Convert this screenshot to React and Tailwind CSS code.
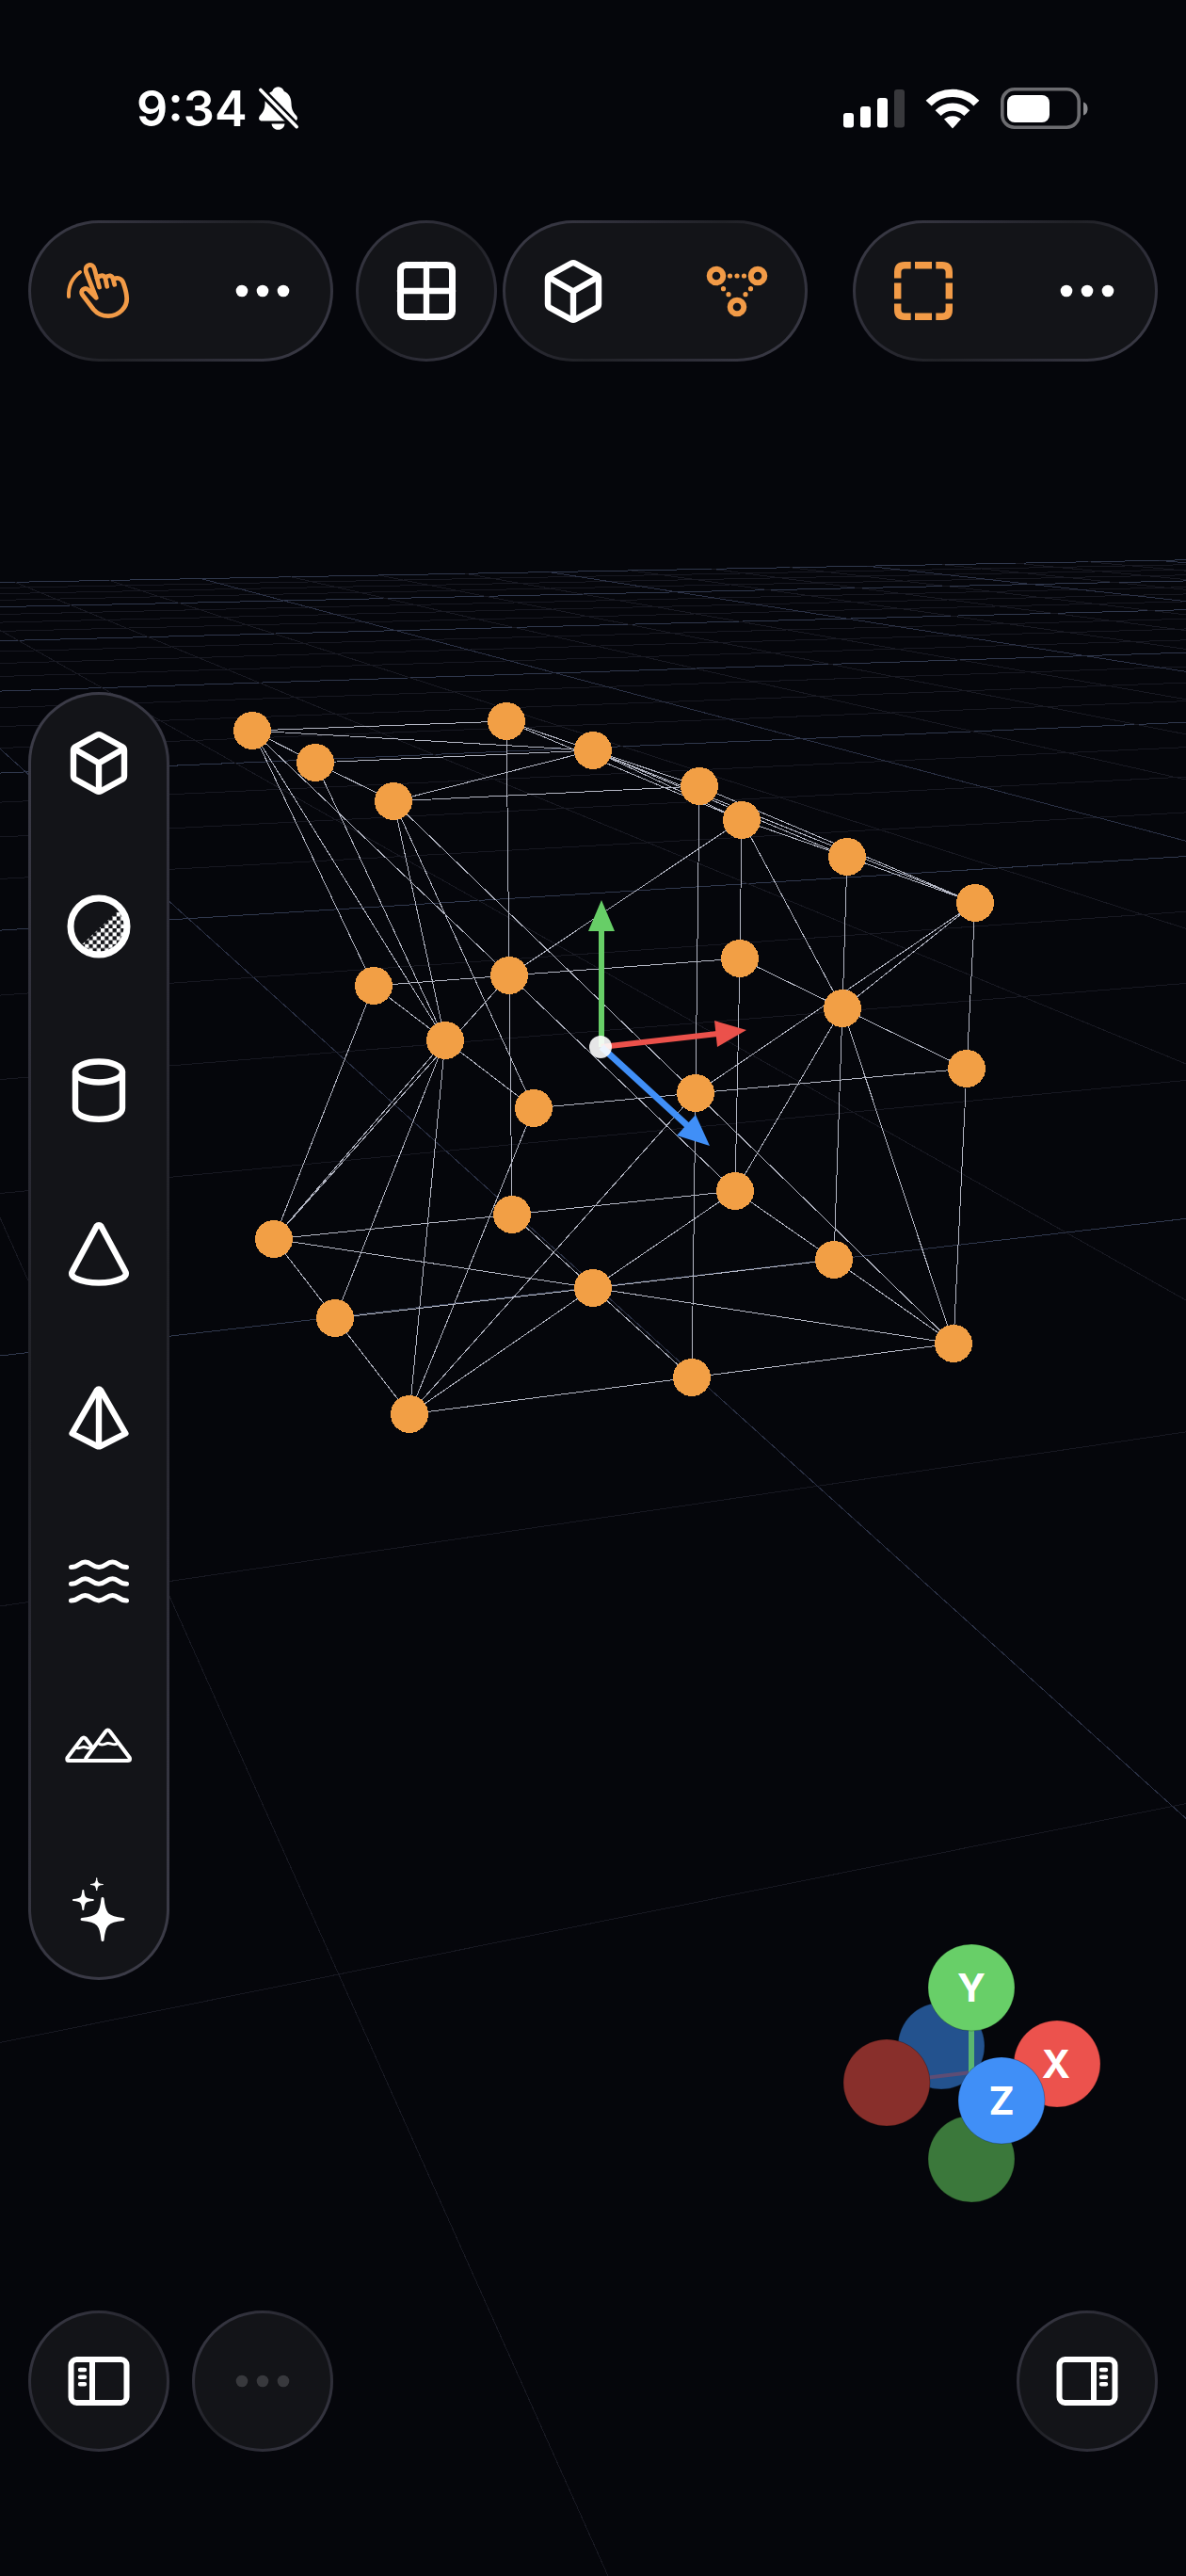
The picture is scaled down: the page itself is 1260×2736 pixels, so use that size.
import clsx from "clsx";

const HORIZON = 458;
const VANISH_X = -374;

// rows of the ground plane, from far to near, every fourth one is a major line
const gridRows = Array.from({ length: 27 }, (_, i) => {
  const k = 24 - i;
  const depth = 0.0010183 + (k * 0.000868) / 4;
  return {
    key: k,
    major: k % 4 === 0,
    y1: HORIZON + 1 / depth,
    y2: HORIZON + 1 / (depth * 1.1742),
  };
});

// lines that run away from the viewer towards the vanishing point
const gridColumns = Array.from({ length: 18 }, (_, i) => {
  const k = i - 1;
  const run = 1.109 + (k * 2.645) / 4;
  // start on the far edge of the plane
  const a = 618.6;
  const slope = (594.8 - 618.6) / 1260;
  const t = (a + slope * VANISH_X - HORIZON) / (1 - slope * run);
  return {
    key: k,
    major: k % 4 === 0,
    x1: VANISH_X + run * t,
    y1: HORIZON + t,
    x2: VANISH_X + run * 2400,
    y2: HORIZON + 2400,
  };
});

const nodes = {
  a: [268, 776],
  b: [335, 810],
  c: [418, 851],
  d: [538, 766],
  e: [630, 797],
  f: [397, 1047],
  g: [541, 1036],
  h: [473, 1105],
  i: [743, 835],
  j: [788, 871],
  k: [900, 910],
  l: [1036, 959],
  m: [786, 1018],
  n: [895, 1071],
  o: [1027, 1135],
  p: [739, 1161],
  q: [567, 1177],
  r: [544, 1290],
  s: [291, 1316],
  t: [356, 1400],
  u: [435, 1502],
  v: [630, 1368],
  w: [781, 1265],
  x: [886, 1338],
  y: [1013, 1427],
  z: [735, 1463],
};

const edges = [
  "ab", "bc", "ad", "dj", "jk", "kl", "ci", "il",
  "ea", "eb", "ec", "ed", "ei", "ej", "ek", "el",
  "af", "fs", "cq", "qu", "st", "tu",
  "ha", "hb", "hc", "hf", "hq", "hs", "ht", "hu",
  "ga", "gd", "gj", "gf", "gm", "gs", "gr", "gw",
  "jm", "mw", "lo", "oy", "wx", "xy",
  "nj", "nk", "nl", "nm", "no", "nw", "nx", "ny",
  "pc", "pi", "pl", "pq", "po", "pu", "pz", "py",
  "sr", "rw", "uz", "zy",
  "vs", "vr", "vw", "vt", "vx", "vu", "vz", "vy",
];

const Viewport = () => (
  <svg
    className="absolute inset-0 w-full h-full"
    viewBox="0 0 1260 2736"
    preserveAspectRatio="xMidYMid slice"
    aria-hidden="true"
  >
    <g shapeRendering="crispEdges">
      {gridRows.map((l) => (
        <line key={l.key} x1={0} y1={l.y1} x2={1260} y2={l.y2} stroke={l.major ? "#30384d" : "#171821"} />
      ))}
      {gridColumns.map((l) => (
        <line key={l.key} x1={l.x1} y1={l.y1} x2={l.x2} y2={l.y2} stroke={l.major ? "#2b3145" : "#181922"} />
      ))}
      {edges.map((e) => {
        const [x1, y1] = nodes[e[0]];
        const [x2, y2] = nodes[e[1]];
        return <line key={e} x1={x1} y1={y1} x2={x2} y2={y2} stroke="#b4b7c4" />;
      })}
      {Object.entries(nodes).map(([id, [cx, cy]]) => (
        <circle key={id} cx={cx} cy={cy} r={20} fill="#f29f45" />
      ))}
    </g>
    <path d="M639 1112V985" stroke="#67ce67" strokeWidth="6" />
    <path d="M639 956L653 989H625Z" fill="#67ce67" />
    <path d="M639 1112L762 1098" stroke="#eb514b" strokeWidth="6" />
    <path d="M793 1094L759 1084L762 1112Z" fill="#eb514b" />
    <path d="M639 1112L732 1197" stroke="#408ff7" strokeWidth="7" />
    <path d="M754 1217L739 1184L719 1206Z" fill="#408ff7" />
    <circle cx="638" cy="1112" r="12" fill="#fff" fillOpacity="0.9" />
  </svg>
);

const Icon = ({ children, width = 6.4, className }) => (
  <svg
    className={clsx("w-20 h-20", className)}
    viewBox="0 0 80 80"
    fill="none"
    stroke="currentColor"
    strokeWidth={width}
    strokeLinecap="round"
    strokeLinejoin="round"
    aria-hidden="true"
  >
    {children}
  </svg>
);

const DotsIcon = () => (
  <Icon>
    <g fill="currentColor" stroke="none">
      <circle cx="18" cy="40" r="6.3" />
      <circle cx="40" cy="40" r="6.3" />
      <circle cx="62" cy="40" r="6.3" />
    </g>
  </Icon>
);

const TouchIcon = () => (
  <Icon width={4.8}>
    <path strokeWidth="4" d="M8 46C7.5 35 12 26 20 20" />
    <path d="M40.5 36L35.3 16.5C33.5 10 24.5 11.5 26.3 19.5L37.2 47.3L29 39C25 35.5 19.5 39.5 22.5 44L34.3 59.5C39 65 44 66.7 50 66.7C62 66.5 70 57 69.7 48C69.5 41 67.5 36 66 31.5C64.5 27 60 25 56 27.5" />
    <path d="M38 26.5C42 22.5 46 23 47 27L48.7 35.2M47 26C50.5 22.5 54.3 23.5 55.2 27.5L56.7 33.3" />
  </Icon>
);

const GridIcon = () => (
  <Icon width={7}>
    <rect x="12.5" y="12.5" width="55" height="55" rx="6" />
    <path strokeWidth="6.4" d="M40 12V68M12 40H68" />
  </Icon>
);

const CubeIcon = () => (
  <Icon>
    <path d="M37.8 10.8Q40 9.5 42.2 10.8L65 23.3Q67 24.5 67 27V54Q67 56.5 65 57.7L42.2 70.2Q40 71.4 37.8 70.2L15 57.7Q13 56.5 13 54V27Q13 24.5 15 23.3Z" />
    <path d="M14 25.5L40 40.5L66 25.5M40 40.5V70" />
  </Icon>
);

const VerticesIcon = () => (
  <Icon width={6}>
    <circle cx="18" cy="24" r="7.3" />
    <circle cx="62" cy="24" r="7.3" />
    <circle cx="40" cy="57" r="7.3" />
    <g fill="currentColor" stroke="none">
      <circle cx="32.5" cy="24" r="2.6" />
      <circle cx="40" cy="24" r="2.6" />
      <circle cx="47.5" cy="24" r="2.6" />
      <circle cx="25.5" cy="37.7" r="2.6" />
      <circle cx="31" cy="43.7" r="2.6" />
      <circle cx="54.5" cy="37.7" r="2.6" />
      <circle cx="49" cy="43.7" r="2.6" />
    </g>
  </Icon>
);

const SelectionIcon = () => (
  <Icon width={7.4}>
    <g strokeLinecap="butt">
      <path d="M12.7 26.5V20Q12.7 12.7 20 12.7H26.7M53.3 12.7H60Q67.3 12.7 67.3 20V26.5M67.3 53.5V60Q67.3 67.3 60 67.3H53.3M26.7 67.3H20Q12.7 67.3 12.7 60V53.5" />
      <path d="M31 12.7H49M31 67.3H49M12.7 31.5V48.5M67.3 31.5V48.5" />
    </g>
  </Icon>
);

const SphereIcon = () => (
  <Icon width={7}>
    <defs>
      <pattern id="checker" width="8.4" height="8.4" patternUnits="userSpaceOnUse">
        <path d="M0 0H4.2V4.2H0ZM4.2 4.2H8.4V8.4H4.2Z" fill="#fff" stroke="none" />
      </pattern>
      <clipPath id="shade">
        <path d="M18 63L64 20L80 40V80H18Z" />
      </clipPath>
    </defs>
    <circle cx="40" cy="40" r="28" fill="url(#checker)" stroke="none" clipPath="url(#shade)" />
    <circle cx="40" cy="40" r="30" />
  </Icon>
);

const CylinderIcon = () => (
  <Icon>
    <ellipse cx="40" cy="20.5" rx="25" ry="11" />
    <path d="M15 20.5V59C15 66 26 70.7 40 70.7S65 66 65 59V20.5" />
  </Icon>
);

const ConeIcon = () => (
  <Icon>
    <path d="M37.6 10.5Q40 7.8 42.4 10.5L68 58C70 61.5 68 64 64 66C51 72 29 72 16 66C12 64 10 61.5 12 58Z" />
  </Icon>
);

const PyramidIcon = () => (
  <Icon>
    <path d="M37.8 10.8Q40 8.3 42.2 10.8L68.4 56.5L42 69.8Q40 70.8 38 69.8L11.6 56.5Z" />
    <path d="M40 12V69" />
  </Icon>
);

const WavesIcon = () => (
  <Icon width={5}>
    {[0, 17.7, 35.4].map((dy) => (
      <path
        key={dy}
        transform={`translate(0 ${dy})`}
        d="M10.5 24.5C19 24.5 19 19 25.5 19S33 24.5 40 24.5S48 19 54.5 19S61 24.5 69.5 24.5"
      />
    ))}
  </Icon>
);

const MountainsIcon = () => (
  <Icon width={4}>
    <path d="M32 40.5L26 32.5Q24 30.5 22 32.5L6.5 53Q5.5 56 8 56H27" />
    <path d="M47.2 25Q49.5 22.2 51.8 25L72.8 53Q74 56 71 56H28Q25 56 26.5 53Z" />
    <path strokeWidth="3" d="M39.5 37.5C43 41 46 38 49.5 37.5S56 41 60 37.5M16 42C19 44 21 41.5 24 41.5S28 44 31 42" />
  </Icon>
);

const SparklesIcon = () => (
  <Icon width={3}>
    <g fill="currentColor">
      <path d="M44 28.5C45.5 44 48 49 66 50.5C48 52 45.5 57 44 72.5C42.5 57 40 52 22 50.5C40 49 42.5 44 44 28.5Z" />
      <path strokeWidth="2" d="M23.3 20C24 28 25.3 29.4 33.8 30C25.3 30.6 24 32 23.3 40C22.6 32 21.3 30.6 13 30C21.3 29.4 22.6 28 23.3 20Z" />
      <path strokeWidth="1" d="M37.7 7C38.3 12 39.2 13 44.5 13.5C39.2 14 38.3 15 37.7 20C37.1 15 36.2 14 31 13.5C36.2 13 37.1 12 37.7 7Z" />
    </g>
  </Icon>
);

const PanelIcon = ({ right }) => (
  <Icon width={6} className={clsx(right && "-scale-x-100")}>
    <rect x="10.5" y="17" width="59" height="46" rx="6" />
    <path strokeLinecap="butt" d="M33 17V63" />
    <path strokeWidth="4.4" d="M20 28H25M20 35.7H25M20 43.3H25" />
  </Icon>
);

const Pill = ({ children, vertical }) => (
  <div
    className={clsx(
      "flex gap-[30px] rounded-[75px] border-[3px] border-transparent",
      "[background:linear-gradient(#131418,#131418)_padding-box,linear-gradient(135deg,#3d3d49_0%,#2c2c36_30%,#202126_50%,#2c2c36_70%,#3d3d49_100%)_border-box]",
      vertical ? "flex-col" : "flex-row"
    )}
  >
    {children}
  </div>
);

const ToolButton = ({ label, active, disabled, children }) => (
  <button
    type="button"
    aria-label={label}
    disabled={disabled}
    className={clsx(
      "-m-[3px] flex w-[150px] h-[150px] items-center justify-center rounded-full",
      active ? "text-[#f29b47]" : disabled ? "text-[#38393d]" : "text-white"
    )}
  >
    {children}
  </button>
);

const StatusBar = () => (
  <header className="flex h-[230px] items-center justify-between pl-[145px] pr-[104px] text-white">
    <div className="flex items-center gap-[11px]">
      <span className="pt-[2px] text-[52px] leading-none font-semibold">9:34</span>
      <svg className="w-11 h-12" viewBox="0 0 44 48" aria-label="Silent">
        <path
          d="M21.5 1.3C25 1.3 27 3.5 27.8 6C33.5 8.5 35.3 13 35.5 19C35.7 26 38 28.5 41 32C43 35 41.5 37.5 38.5 37.5H4.5C1.5 37.5 0 35 2 32C5 28.5 7.3 26 7.5 19C7.7 13 9.5 8.5 15.2 6C16 3.5 18 1.3 21.5 1.3Z"
          fill="#fff"
        />
        <path d="M14.5 40.5H28.5C28 44.5 25 46.8 21.5 46.8S15 44.5 14.5 40.5Z" fill="#fff" />
        <path d="M0 2L44 47" stroke="#05060b" strokeWidth="9" />
        <path d="M2.8 4.5L41.2 43.7" stroke="#fff" strokeWidth="3.6" strokeLinecap="round" />
      </svg>
    </div>
    <div className="flex items-center gap-[22px]">
      <svg className="w-[65px] h-[42px]" viewBox="0 0 65 42" fill="#fff" aria-label="Signal">
        <rect x="0" y="26" width="11" height="15.5" rx="3" />
        <rect x="18" y="19" width="11" height="22.5" rx="3" />
        <rect x="36" y="10" width="11" height="31.5" rx="3" />
        <rect x="54" y="1" width="11" height="40.5" rx="3" fill="#38383c" />
      </svg>
      <svg className="w-[58px] h-11" viewBox="0 0 58 44" fill="none" stroke="#fff" strokeWidth="8.4" aria-label="Wi-Fi">
        <path d="M3.6 16.6A35.5 35.5 0 0 1 54.4 16.6" />
        <path d="M13.6 27.2A21.4 21.4 0 0 1 44.4 27.2" />
        <path d="M29 43.5L20 33.6A13.5 13.5 0 0 1 38 33.6Z" fill="#fff" stroke="none" />
      </svg>
      <svg className="w-[93px] h-11" viewBox="0 0 93 44" aria-label="Battery">
        <rect x="1.8" y="1.8" width="81.4" height="40.4" rx="13" fill="none" stroke="#6c6c70" strokeWidth="3.6" />
        <rect x="7" y="8" width="45" height="29" rx="8" fill="#fff" />
        <path d="M88 15.5C94 17 94 28 88 29.5Z" fill="#8a8a8e" />
      </svg>
    </div>
  </header>
);

const shapes = [
  { label: "Cube", icon: CubeIcon },
  { label: "Sphere", icon: SphereIcon },
  { label: "Cylinder", icon: CylinderIcon },
  { label: "Cone", icon: ConeIcon },
  { label: "Pyramid", icon: PyramidIcon },
  { label: "Waves", icon: WavesIcon },
  { label: "Terrain", icon: MountainsIcon },
  { label: "Generate", icon: SparklesIcon },
];

const AxisGizmo = () => (
  <svg
    className="w-[276px] h-[276px]"
    viewBox="894 2064 276 276"
    fontSize="41"
    fontWeight="700"
    textAnchor="middle"
    role="img"
    aria-label="View axes"
  >
    <g stroke="#000" strokeOpacity="0.25">
      <circle cx="1032" cy="2293" r="46" fill="#3b783b" />
      <circle cx="1000" cy="2173" r="46" fill="#23528e" />
    </g>
    <path d="M941 2212L1032 2201" stroke="#5d4d75" strokeWidth="4" />
    <path d="M1032 2111V2202" stroke="#5bb66f" strokeWidth="6" />
    <g stroke="#000" strokeOpacity="0.25">
      <circle cx="942" cy="2212" r="46" fill="#882f2b" />
      <circle cx="1123" cy="2192" r="46" fill="#ec524d" />
      <circle cx="1032" cy="2111" r="46" fill="#68cf68" />
      <circle cx="1064" cy="2231" r="46" fill="#408ff7" />
    </g>
    <g fill="#fff">
      <text x="1122" y="2207">X</text>
      <text x="1032" y="2126">Y</text>
      <text x="1064" y="2246">Z</text>
    </g>
  </svg>
);

const App = () => {
  return (
    <div className="relative flex min-h-screen flex-col overflow-hidden bg-[#05060b] font-['Inter',sans-serif]">
      <Viewport />
      <div className="relative flex flex-1 flex-col">
        <StatusBar />

        <nav className="flex justify-between px-[30px] pt-1">
          <div className="flex gap-6">
            <Pill>
              <ToolButton label="Touch navigation" active>
                <TouchIcon />
              </ToolButton>
              <ToolButton label="More navigation options">
                <DotsIcon />
              </ToolButton>
            </Pill>
            <div className="flex gap-[6px]">
              <Pill>
                <ToolButton label="Split view">
                  <GridIcon />
                </ToolButton>
              </Pill>
              <Pill>
                <ToolButton label="Object mode">
                  <CubeIcon />
                </ToolButton>
                <ToolButton label="Vertex mode" active>
                  <VerticesIcon />
                </ToolButton>
              </Pill>
            </div>
          </div>
          <Pill>
            <ToolButton label="Box selection" active>
              <SelectionIcon />
            </ToolButton>
            <ToolButton label="More selection options">
              <DotsIcon />
            </ToolButton>
          </Pill>
        </nav>

        <main className="flex flex-1 items-center justify-between pl-[30px] pr-[90px]">
          <Pill vertical>
            {shapes.map(({ label, icon: ShapeIcon }) => (
              <ToolButton key={label} label={label}>
                <ShapeIcon />
              </ToolButton>
            ))}
          </Pill>
          <div className="self-end pb-[114px]">
            <AxisGizmo />
          </div>
        </main>

        <footer className="flex justify-between px-[30px] pb-[132px]">
          <div className="flex gap-6">
            <Pill>
              <ToolButton label="Toggle left panel">
                <PanelIcon />
              </ToolButton>
            </Pill>
            <Pill>
              <ToolButton label="More" disabled>
                <DotsIcon />
              </ToolButton>
            </Pill>
          </div>
          <Pill>
            <ToolButton label="Toggle right panel">
              <PanelIcon right />
            </ToolButton>
          </Pill>
        </footer>
      </div>
    </div>
  );
};

export default App;
